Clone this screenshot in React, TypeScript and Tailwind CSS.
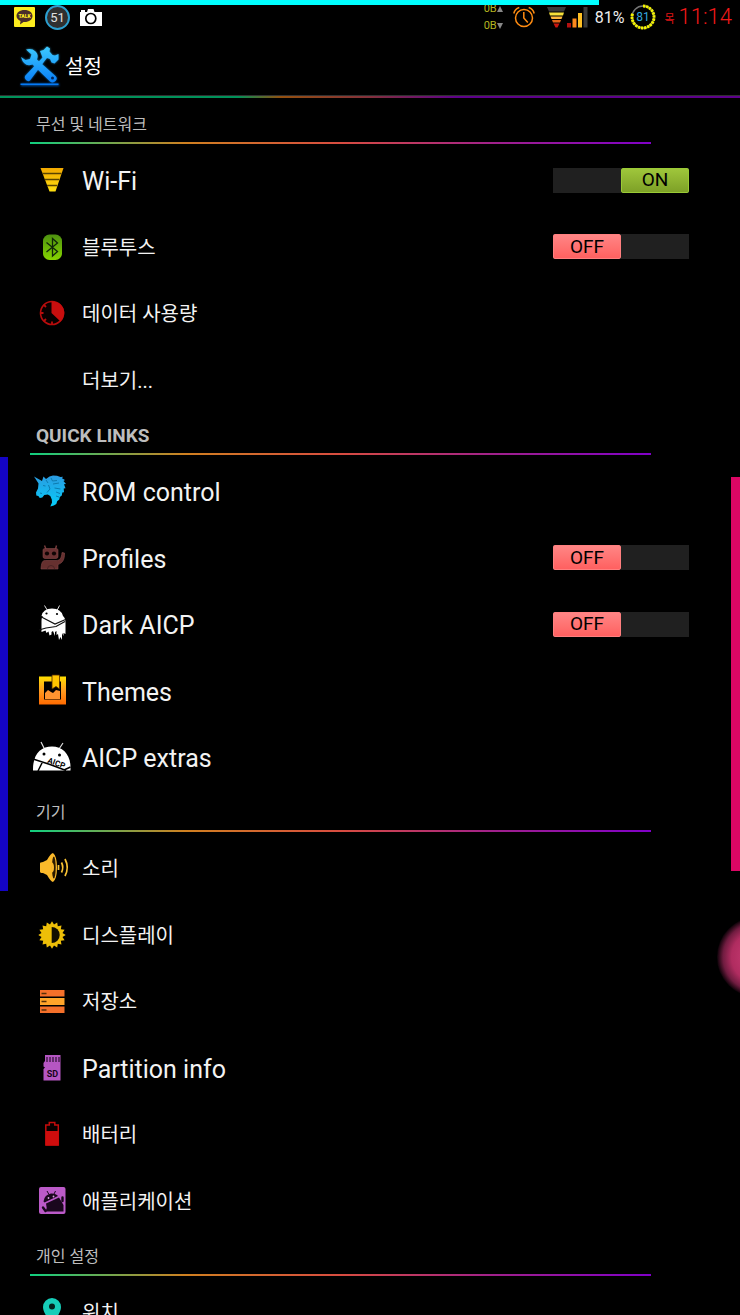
import { useState, type ReactNode } from "react";

const svgBox = "block h-10 w-10 shrink-0";

function WifiIcon() {
  return (
    <svg viewBox="0 0 40 40" className={svgBox} aria-hidden="true">
      <defs>
        <linearGradient id="wifi" x1="0" y1="0" x2="0" y2="1">
          <stop offset="0" stopColor="#f2a900" />
          <stop offset="1" stopColor="#ffdf10" />
        </linearGradient>
      </defs>
      <path d="M8.5 8h23L23.5 31.5h-6z" fill="url(#wifi)" />
      <path d="M10.500 13.500h19M12.800 19.500h14.400M15 25.500h10" stroke="#5a4300" strokeWidth="1.300" />
    </svg>
  );
}

function BluetoothIcon() {
  return (
    <svg viewBox="0 0 40 40" className={svgBox} aria-hidden="true">
      <defs>
        <linearGradient id="bt" x1="0" y1="0" x2="0" y2="1">
          <stop offset="0" stopColor="#4d9110" />
          <stop offset="1" stopColor="#86d400" />
        </linearGradient>
      </defs>
      <rect x="11" y="7.500" width="19" height="25.500" rx="6.500" fill="url(#bt)" />
      <path d="M14.500 15.500l11 9-5 4.500V11.500l5 4.500-11 9" fill="none" stroke="#10260a" strokeWidth="1.300" />
    </svg>
  );
}

function DataIcon() {
  return (
    <svg viewBox="0 0 40 40" className={svgBox} aria-hidden="true">
      <circle cx="20" cy="20" r="11.500" fill="#080000" stroke="#b80c0c" strokeWidth="1.600" />
      <path d="M19.500 20V8.500A11.500 11.500 0 0 1 28.500 28.500z" fill="#c80e0e" />
      <path d="M8.500 20h3M12 12l2 2M20 31.500v-3M12 28l2-2" stroke="#b80c0c" strokeWidth="1.800" />
    </svg>
  );
}

function UnicornIcon() {
  return (
    <svg viewBox="0 0 40 40" className={svgBox} aria-hidden="true">
      <defs>
        <linearGradient id="uni" x1="0" y1="0" x2="0" y2="1">
          <stop offset="0" stopColor="#2b9be0" />
          <stop offset="1" stopColor="#05cdfa" />
        </linearGradient>
      </defs>
      <path
        d="M2 5.500L10 10l1.500-4.500 2.500 2.500 3.500-2.500 3.500-1 4 .3 3.500 1.200 2.500-.2-1 1.500 3 1.700-1.500 1 2.500 3-2 .2 1.500 4-1.800.3.300 3.700-1.700.2-.5 3-2 1.500-.5 2.500-2 1.500-1 3-2.500 1.500-3.500 1 1.700-4-.2-3-1.500-3.300-2.500-1.600-3.500.4-2 2.500-2.500.7-1.500-2-2-.5-.3-3 2-4 .5-5z"
        fill="url(#uni)"
      />
      <path
        d="M11 14.500l2.500.5M14 9l2 3M19 7l1.500 3 4.500-.5M21 13l6-1M22.500 17l6 1M24 21l4 1.500M24 25l3 1M16.500 14l1.500 4-3 3.500M8 22l2 .5"
        fill="none"
        stroke="#0a76a8"
        strokeWidth=".9"
      />
    </svg>
  );
}

function ProfilesIcon() {
  return (
    <svg viewBox="0 0 40 40" className={svgBox} aria-hidden="true">
      <path d="M12.500 7.500l1.500 3.500M24.500 7.500L23.500 11" stroke="#7a3d3d" strokeWidth="1.400" />
      <path
        d="M11 12q0-1.500 2-1.500h11q2 0 2 1.500v6.500q0 2-2 2H13q-2 0-2-2z"
        fill="#6b3233"
        stroke="#854848"
        strokeWidth=".6"
      />
      <path
        d="M9 31c.5-6 1-8.500 4.500-8.500H24c4 0 5.500-2.500 6-8l2.500.5c.3 6.500-2 10-6.500 11.500V31z"
        fill="#66302f"
        stroke="#854848"
        strokeWidth=".6"
      />
      <circle cx="15" cy="15.500" r="2.100" fill="#100505" />
      <circle cx="22" cy="15.500" r="2.100" fill="#100505" />
      <path d="M15.500 31q0-3.500 3.500-3.500t3.500 3.500" fill="none" stroke="#4a2424" />
    </svg>
  );
}

function DarkIcon() {
  return (
    <svg viewBox="0 0 40 40" className={svgBox} aria-hidden="true">
      <path d="M12.500 1.500l3 5M27.500 1.500L25 6.500" stroke="#ddd" strokeWidth="1" />
      <path
        d="M9.500 12Q11 4.500 20 4.500T31 12q2.500 2 2.500 7v11l-2-1v3l-1.500-3v7l-1.500-3-1.500 3-1-6-1.500 1v-4l-1.500 1v4l-2-5-1.500 1v2.500l-2 1-1-4-2 1.500-1-2.500-4 1.500V17q0-4 1.500-5z"
        fill="#fff"
      />
      <circle cx="14.500" cy="9.500" r="1.100" fill="#000" />
      <circle cx="25" cy="10" r="1.100" fill="#000" />
      <path d="M8.500 12.500L23 20l10.500-4.500M7 26l7-2 10-1.500 9-5" fill="none" stroke="#111" strokeWidth="1.200" />
    </svg>
  );
}

function ThemesIcon() {
  return (
    <svg viewBox="0 0 40 40" className={svgBox} aria-hidden="true">
      <defs>
        <linearGradient id="themes" x1="0" y1="0" x2="0" y2="1">
          <stop offset="0" stopColor="#ffe000" />
          <stop offset=".5" stopColor="#ff9b20" />
          <stop offset="1" stopColor="#ff6a00" />
        </linearGradient>
      </defs>
      <path fillRule="evenodd" d="M7 5.500h27v28H7zM12 10.500h17v18H12z" fill="url(#themes)" />
      <path d="M20 4h7.500v14L24 15.500 20 18z" fill="#ffc400" stroke="#4d2600" strokeWidth=".8" />
      <path d="M13 28v-6l3-3 3 2 2 1 3-3 4 1v8z" fill="#ff9430" />
    </svg>
  );
}

function ExtrasIcon() {
  return (
    <svg viewBox="0 0 40 40" className={svgBox} aria-hidden="true">
      <path d="M9 5l3.500 7M31 6l-4 6" stroke="#ddd" strokeWidth="1.200" />
      <path d="M1 32C1 17 9 9.500 20 9.500S38.500 18 38.500 30v3.500H1z" fill="#fff" />
      <circle cx="12" cy="17" r="1.500" fill="#000" />
      <circle cx="27.500" cy="18" r="1.500" fill="#000" />
      <path d="M1 22l17 5.500L34 33.500M10.500 25L6 34M32 33l6.500-3" fill="none" stroke="#000" strokeWidth="1.500" />
      <text x="15" y="25.500" transform="rotate(20 15 25.500)" fontSize="8" fontWeight="700" fontFamily="Roboto, sans-serif" fill="#000">
        AICP
      </text>
    </svg>
  );
}

function SoundIcon() {
  return (
    <svg viewBox="0 0 40 40" className={svgBox} aria-hidden="true">
      <path d="M8 15.500q0-1.500 3-1.500l4-2q4-7 6-7 4 3 4 14.500T21 34q-2 0-6-7l-4-2q-3 0-3-1.500z" fill="#fbb92a" />
      <ellipse cx="21.800" cy="19.500" rx="1.900" ry="11" fill="#2b1a00" />
      <path d="M19.500 14q2.500 1 2.500 5.500t-2.500 5.500z" fill="#fbb92a" />
      <path d="M26.500 17v5M29.500 14.500q2.500 5 0 10M33 11q4.500 8.500 0 17" fill="none" stroke="#f9c334" strokeWidth="1.700" />
    </svg>
  );
}

function DisplayIcon() {
  return (
    <svg viewBox="0 0 40 40" className={svgBox} aria-hidden="true">
      <path
        d="M20 6.300l2 3.200 3.200-2.100.6 3.800 3.700-.7-.7 3.700 3.800.6-2.100 3.200 3.200 2-3.200 2 2.100 3.200-3.800.6.700 3.700-3.700-.7-.6 3.800-3.200-2.100-2 3.200-2-3.200-3.200 2.100-.6-3.800-3.700.7.700-3.700-3.800-.6 2.100-3.200-3.200-2 3.200-2-2.100-3.200 3.800-.6-.7-3.700 3.700.7.600-3.800 3.200 2.100z"
        fill="#eebf08"
      />
      <path d="M19.700 12a8 8 0 0 1 0 16z" fill="#120e00" />
    </svg>
  );
}

function StorageIcon() {
  return (
    <svg viewBox="0 0 40 40" className={svgBox} aria-hidden="true">
      <rect x="8" y="9" width="24.500" height="6.500" fill="#f4702a" />
      <rect x="8" y="17" width="24.500" height="7" fill="#ffa52a" />
      <rect x="8" y="25.500" width="24.500" height="6.500" fill="#f4702a" />
      <path d="M9.500 12.500h5M9.500 20.500h5M9.500 29h5" stroke="#573008" strokeWidth="1.500" />
    </svg>
  );
}

function SdIcon() {
  return (
    <svg viewBox="0 0 40 40" className={svgBox} aria-hidden="true">
      <path d="M13 7h15.500v25.500h-17V21l1.500-1.500-1.500-1V15l1.500-2z" fill="#b556c2" />
      <path d="M15 9v5M18 9v5M21 9v5M24 9v5M27 9v5" stroke="#2a0f30" strokeWidth="1.200" />
      <text x="20.500" y="29" textAnchor="middle" fontSize="9" fontWeight="700" fontFamily="Roboto, sans-serif" fill="#16041a">
        SD
      </text>
    </svg>
  );
}

function BatteryIcon() {
  return (
    <svg viewBox="0 0 40 40" className={svgBox} aria-hidden="true">
      <path d="M13.800 31V11h3.500V8.500h5.500V11h3.500v20z" fill="#080000" stroke="#c40b0b" strokeWidth="1.500" />
      <path d="M14 17h12.500v14.500H14z" fill="#cf0d0d" />
    </svg>
  );
}

function AppsIcon() {
  return (
    <svg viewBox="0 0 40 40" className={svgBox} aria-hidden="true">
      <rect x="7" y="6" width="26.500" height="27" rx="2" fill="#bb5ac8" />
      <path d="M15 10l2 3.500M23.500 10l-1.500 3" stroke="#1a071d" strokeWidth="1" />
      <path d="M11.500 20.500q1-7 7.500-8 5-.2 7 2.500L12.500 21.500z" fill="#1a071d" />
      <path d="M14 22.500L27 16.500l4.500 7.500v6.500H13.500q2-4 .5-8z" fill="#1a071d" />
      <path d="M11 26.500l2.500 3.500M30.500 16.500v3.500" stroke="#1a071d" strokeWidth="2.400" strokeLinecap="round" />
      <circle cx="16.500" cy="17" r=".9" fill="#d9a0e0" />
      <circle cx="21.500" cy="15.500" r=".9" fill="#d9a0e0" />
    </svg>
  );
}

function PinIcon() {
  return (
    <svg viewBox="0 0 40 40" className={svgBox} aria-hidden="true">
      <path d="M20 35c-2-8-9-13-9-20a9 9 0 0 1 18 0c0 7-7 12-9 20z" fill="#16cdb8" />
      <circle cx="20" cy="14.500" r="3" fill="#04211d" />
    </svg>
  );
}

const hammer =
  "M21 5l3.500-1 3.500-3.500 3 2-.5 3 3 3.500 2.500.5 3.500-1.500v5.500l-4 4-3-1-1.500-3.500-3-1-2 2.500L11 34.500q-2 1.500-4-.5t-1-4L23.500 11.500z";
const wrench =
  "M2 11l4.500 3 4.500-1 1.500-4.500L7 3.500q6-1.500 9.500 2T18 13.500L36.500 30q2.500 2.500 0 5t-5.500.5L13.500 18.500Q5 21.500 2 11z";

function ToolsIcon() {
  return (
    <svg viewBox="0 0 42 42" className="block h-[42px] w-[42px] shrink-0" aria-hidden="true">
      <defs>
        <linearGradient id="tools" x1="0" y1="0" x2="0" y2="42" gradientUnits="userSpaceOnUse">
          <stop offset="0" stopColor="#3ecbff" />
          <stop offset="1" stopColor="#0072f5" />
        </linearGradient>
        <filter id="glow" x="-20%" y="-20%" width="140%" height="140%">
          <feGaussianBlur stdDeviation="1.200" />
        </filter>
      </defs>
      <g fill="url(#tools)" filter="url(#glow)" opacity=".7">
        <path d={hammer} />
        <path d={wrench} />
        <path d="M2 37.500h38v2.500H2z" />
      </g>
      <g fill="url(#tools)">
        <path d={hammer} />
        <path d={wrench} />
        <path d="M1.500 37.500h38v1.500h-38z" />
      </g>
      <circle cx="33.500" cy="32" r="1.500" fill="#00245a" />
    </svg>
  );
}

function TalkIcon() {
  return (
    <svg viewBox="0 0 21 20" className="block h-5 w-[21px]" aria-hidden="true">
      <rect width="21" height="20" rx="1" fill="#fdec1e" />
      <path d="M10.500 3c4.800 0 8 2.600 8 6s-3.200 6-8 6l-1 0-3.500 2.500.5-3.500Q2.500 12 2.500 9c0-3.400 3.200-6 8-6z" fill="#4a2d2b" />
      <text x="10.500" y="11" textAnchor="middle" fontSize="5" fontWeight="900" fontFamily="Roboto, sans-serif" fill="#fdec1e">
        TALK
      </text>
    </svg>
  );
}

function CameraIcon() {
  return (
    <svg viewBox="0 0 22 17" className="block h-[17px] w-[22px]" aria-hidden="true">
      <path d="M0 3h1V1h4v2h2l1-3h5.500l1 3H22v14H0z" fill="#fff" />
      <circle cx="10.800" cy="9.500" r="5" fill="#fff" stroke="#000" strokeWidth="1.700" />
    </svg>
  );
}

function AlarmIcon() {
  return (
    <svg viewBox="0 0 22 22" className="block h-[22px] w-[22px]" aria-hidden="true">
      <g fill="none" stroke="#ff8c12" strokeWidth="1.500">
        <circle cx="11" cy="12" r="8.500" />
        <path d="M10.800 6v6l4 4.500M.8 7.500q1-4.500 5.500-6M21.200 7.500q-1-4.500-5.500-6" />
      </g>
    </svg>
  );
}

function SignalIcons() {
  return (
    <svg viewBox="0 0 42 22" className="block h-[22px] w-[42px]" aria-hidden="true">
      <path d="M0 1h19l-2 4.500H2z" fill="#3b3b3b" />
      <path d="M2 6.500h15l-1 3H3z" fill="#f6e13a" />
      <path d="M3.500 10.500h12l-1 2.500h-10z" fill="#ffb93d" />
      <path d="M5 14h9l-1 2.500H6z" fill="#e2661b" />
      <path d="M6.500 17.500h6L10.500 21.500h-2z" fill="#c9150f" />
      <rect x="20" y="17" width="4" height="4.500" fill="#b41010" />
      <rect x="25.500" y="12.500" width="4" height="9" fill="#ff8a1c" />
      <rect x="31" y="7" width="4" height="14.500" fill="#ffc025" />
      <rect x="36.500" y="1" width="4" height="20.500" fill="#3b3b3b" />
    </svg>
  );
}

function BatteryRing() {
  return (
    <svg viewBox="0 0 26 26" className="block h-[26px] w-[26px]" aria-label="81">
      <circle cx="13" cy="13" r="11" fill="none" stroke="#777" strokeWidth="1.300" />
      <circle
        cx="13"
        cy="13"
        r="11"
        fill="none"
        stroke="#f4f400"
        strokeWidth="3"
        pathLength="100"
        strokeDasharray="3.500 1 3.500 1 3.500 1 3.500 1 3.500 1 3.500 1 3.500 1 3.500 1 3.500 1 3.500 1 3.500 1 3.500 1 3.500 1 3.500 1 3.500 1 3.500 1 3.500 1 3.500 30"
        transform="rotate(-90 13 13)"
      />
      <text x="13" y="17" textAnchor="middle" fontSize="12" fontFamily="Roboto, sans-serif" fill="#33a7de">
        81
      </text>
    </svg>
  );
}

type Item = { label: string; icon?: ReactNode; on?: boolean; korean?: boolean };
type Section = { title: string; korean?: boolean; items: Item[] };

const sections: Section[] = [
  {
    title: "무선 및 네트워크",
    korean: true,
    items: [
      { label: "Wi-Fi", icon: <WifiIcon />, on: true },
      { label: "블루투스", icon: <BluetoothIcon />, on: false, korean: true },
      { label: "데이터 사용량", icon: <DataIcon />, korean: true },
      { label: "더보기...", korean: true },
    ],
  },
  {
    title: "QUICK LINKS",
    items: [
      { label: "ROM control", icon: <UnicornIcon /> },
      { label: "Profiles", icon: <ProfilesIcon />, on: false },
      { label: "Dark AICP", icon: <DarkIcon />, on: false },
      { label: "Themes", icon: <ThemesIcon /> },
      { label: "AICP extras", icon: <ExtrasIcon /> },
    ],
  },
  {
    title: "기기",
    korean: true,
    items: [
      { label: "소리", icon: <SoundIcon />, korean: true },
      { label: "디스플레이", icon: <DisplayIcon />, korean: true },
      { label: "저장소", icon: <StorageIcon />, korean: true },
      { label: "Partition info", icon: <SdIcon /> },
      { label: "배터리", icon: <BatteryIcon />, korean: true },
      { label: "애플리케이션", icon: <AppsIcon />, korean: true },
    ],
  },
  {
    title: "개인 설정",
    korean: true,
    items: [{ label: "위치", icon: <PinIcon />, korean: true }],
  },
];

function Toggle({ label, initial }: { label: string; initial: boolean }) {
  const [on, setOn] = useState(initial);
  return (
    <button
      type="button"
      role="switch"
      aria-checked={on}
      aria-label={label}
      onClick={() => setOn(!on)}
      className={`flex h-[25px] w-[136px] shrink-0 bg-[#202020] ${on ? "justify-end" : "justify-start"}`}
    >
      <span
        className={`flex h-full w-1/2 items-center justify-center rounded-xs border text-[19px] leading-6 text-black ${
          on
            ? "border-[#9acb35] bg-linear-to-b from-[#9fc63b] to-[#7ea127]"
            : "border-[#ff7f7f] bg-linear-to-b from-[#ff8585] to-[#ff6060]"
        }`}
      >
        {on ? "ON" : "OFF"}
      </span>
    </button>
  );
}

function Row({ item }: { item: Item }) {
  return (
    <li className="flex items-center gap-2.5 pr-[51px] pl-8 odd:h-[66px] even:h-[67px]">
      <span className="h-10 w-10 shrink-0">{item.icon}</span>
      <a
        href="#"
        className={`min-w-0 flex-1 truncate text-[#f3f3f3] ${item.korean ? "pt-0.5 text-[20px] leading-8" : "pt-1 text-[25px] leading-8"}`}
      >
        {item.label}
      </a>
      {item.on !== undefined && <Toggle label={item.label} initial={item.on} />}
    </li>
  );
}

export default function App() {
  return (
    <div className="relative flex h-screen flex-col overflow-hidden bg-black font-['Roboto','Noto_Sans_CJK_KR',sans-serif] text-white">
      <div className="flex h-[34px] shrink-0 items-center justify-between pr-2 pl-3.5">
        <div className="flex items-center gap-2.5">
          <TalkIcon />
          <span className="flex h-[25px] w-[25px] items-center justify-center rounded-full border-2 border-[#2c9fd0] bg-[#303030] text-[13px] leading-none text-[#e0e0e0]">
            51
          </span>
          <CameraIcon />
        </div>
        <div className="flex items-center">
          <div className="mr-2.5 text-[11px] leading-[17px] text-[#b5b520]">
            <div className="flex items-center">
              0B
              <svg viewBox="0 0 6 6" className="h-1.5 w-1.5" aria-hidden="true">
                <path d="M3 0l3 6H0z" fill="#888" />
              </svg>
            </div>
            <div className="flex items-center">
              0B
              <svg viewBox="0 0 6 6" className="h-1.5 w-1.5" aria-hidden="true">
                <path d="M0 0h6L3 6z" fill="#888" />
              </svg>
            </div>
          </div>
          <AlarmIcon />
          <span className="ml-3">
            <SignalIcons />
          </span>
          <span className="ml-1.5 pt-0.5 text-[16px] leading-none text-[#eee]">81%</span>
          <span className="ml-1.5">
            <BatteryRing />
          </span>
          <span className="ml-2 pt-1 text-[11px] leading-none text-[#e01515]">목</span>
          <span className="ml-1 text-[22px] leading-none font-light text-[#f01818]">11:14</span>
        </div>
      </div>

      <header className="shrink-0">
        <div className="flex h-[61px] items-center gap-1 pt-1 pl-[19px]">
          <ToolsIcon />
          <h1 className="text-[20px] leading-8">설정</h1>
        </div>
        <div className="h-[3px] border-t border-[#303030] bg-[linear-gradient(to_right,#00925a_0%,#00925a_32%,#94500f_38%,#84303c_50%,#5e008c_62%,#5e008c_100%)]" />
      </header>

      <main className="min-h-0 flex-1 overflow-y-auto pt-1 [scrollbar-width:none]">
        {sections.map((section) => (
          <section key={section.title}>
            <div className="mr-[89px] ml-[30px]">
              <h2
                className={`h-10 pt-1.5 pl-1.5 leading-[34px] text-[#bdbdbd] ${
                  section.korean ? "text-[16px] font-normal" : "text-[19px] font-bold"
                }`}
              >
                {section.title}
              </h2>
              <div className="h-0.5 bg-[linear-gradient(to_right,#10d080_0%,#d08020_25%,#d84c40_50%,#a0208c_75%,#8000c8_100%)]" />
            </div>
            <ul className="pt-[3px]">
              {section.items.map((item) => (
                <Row key={item.label} item={item} />
              ))}
            </ul>
          </section>
        ))}
      </main>

      <div className="absolute top-0 left-0 h-[5px] w-[81%] bg-[#00ffff]" />
      <div className="absolute top-[457px] left-0 h-[434px] w-2 bg-[#1404c4]" />
      <div className="absolute top-[477px] right-0 h-[394px] w-[9px] bg-[#dc0664]" />
      <div className="absolute top-[917px] -right-[57px] h-20 w-20 rounded-full bg-[radial-gradient(circle,#d04078_0%,#b02c60_45%,#701c40_60%,#14040c_70%)]" />
    </div>
  );
}
